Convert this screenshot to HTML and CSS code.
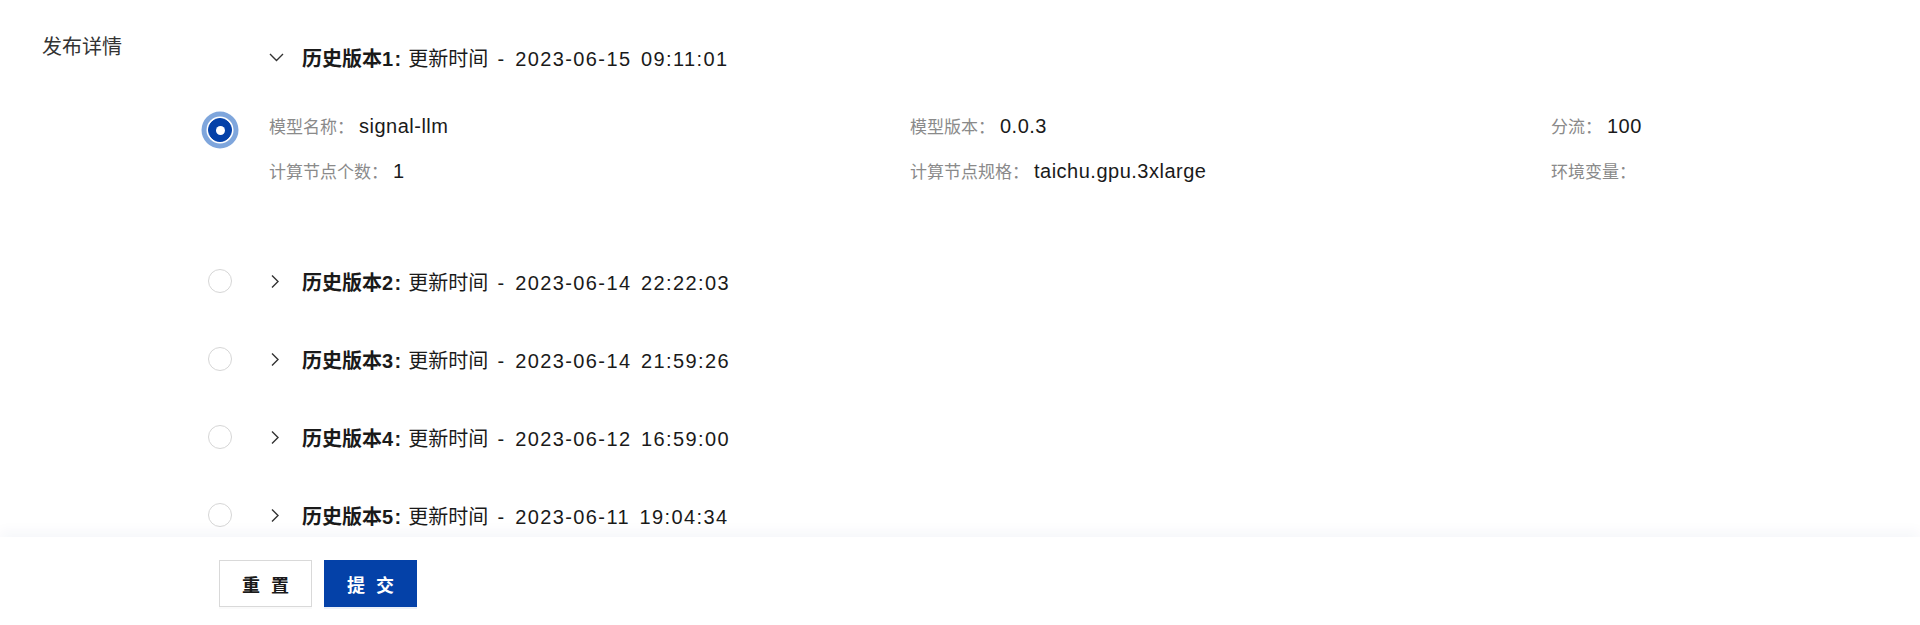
FILE: index.html
```html
<!DOCTYPE html>
<html lang="zh-CN">
<head>
    <meta charset="UTF-8">
    <meta name="viewport" content="width=device-width, initial-scale=1.0">
    <title>发布详情</title>
    <link rel="stylesheet" href="styles.css">
</head>
<body>
    <div class="page">
        <div class="form-row">
            <div class="form-label">发布详情</div>
            <div class="version-list">
                <div class="version">
                    <span class="radio checked"></span>
                    <div class="panel">
                        <div class="panel-head">
                            <svg class="arrow" width="15" height="15" viewBox="0 0 15 15"><polyline points="1,4 7.5,10.5 14,4" fill="none" stroke="#333" stroke-width="1.4"/></svg>
                            <span><b>历史版本<span class="num">1:</span></b> 更新时间<span class="num"> - 2023-06-15 09:11:01</span></span>
                        </div>
                        <div class="panel-body">
                            <div class="field"><span class="field-label">模型名称：</span><span class="field-value">signal-llm</span></div>
                            <div class="field"><span class="field-label">模型版本：</span><span class="field-value">0.0.3</span></div>
                            <div class="field"><span class="field-label">分流：</span><span class="field-value">100</span></div>
                            <div class="field"><span class="field-label">计算节点个数：</span><span class="field-value">1</span></div>
                            <div class="field"><span class="field-label">计算节点规格：</span><span class="field-value">taichu.gpu.3xlarge</span></div>
                            <div class="field"><span class="field-label">环境变量：</span><span class="field-value"></span></div>
                        </div>
                    </div>
                </div>
                <div class="version">
                    <span class="radio"></span>
                    <div class="panel">
                        <div class="panel-head">
                            <svg class="arrow" width="15" height="15" viewBox="0 0 15 15"><polyline points="3,1.5 9,7.5 3,13.5" fill="none" stroke="#333" stroke-width="1.4"/></svg>
                            <span><b>历史版本<span class="num">2:</span></b> 更新时间<span class="num"> - 2023-06-14 22:22:03</span></span>
                        </div>
                    </div>
                </div>
                <div class="version">
                    <span class="radio"></span>
                    <div class="panel">
                        <div class="panel-head">
                            <svg class="arrow" width="15" height="15" viewBox="0 0 15 15"><polyline points="3,1.5 9,7.5 3,13.5" fill="none" stroke="#333" stroke-width="1.4"/></svg>
                            <span><b>历史版本<span class="num">3:</span></b> 更新时间<span class="num"> - 2023-06-14 21:59:26</span></span>
                        </div>
                    </div>
                </div>
                <div class="version">
                    <span class="radio"></span>
                    <div class="panel">
                        <div class="panel-head">
                            <svg class="arrow" width="15" height="15" viewBox="0 0 15 15"><polyline points="3,1.5 9,7.5 3,13.5" fill="none" stroke="#333" stroke-width="1.4"/></svg>
                            <span><b>历史版本<span class="num">4:</span></b> 更新时间<span class="num"> - 2023-06-12 16:59:00</span></span>
                        </div>
                    </div>
                </div>
                <div class="version">
                    <span class="radio"></span>
                    <div class="panel">
                        <div class="panel-head">
                            <svg class="arrow" width="15" height="15" viewBox="0 0 15 15"><polyline points="3,1.5 9,7.5 3,13.5" fill="none" stroke="#333" stroke-width="1.4"/></svg>
                            <span><b>历史版本<span class="num">5:</span></b> 更新时间<span class="num"> - 2023-06-11 19:04:34</span></span>
                        </div>
                    </div>
                </div>
            </div>
        </div>
    </div>
    <div class="footer">
        <button class="btn"><span>重置</span></button>
        <button class="btn btn-primary"><span>提交</span></button>
    </div>
</body>
</html>
```

FILE: styles.css
```css
html, body {
    height: 100%;
}
body {
    margin: 0;
    font-family: "Liberation Sans", "Noto Sans CJK SC", sans-serif;
    color: #1a1a1a;
    background: #fff;
    display: flex;
    flex-direction: column;
    overflow: hidden;
}
.page {
    flex: 1;
    min-height: 0;
    overflow: hidden;
    padding: 32px 0 0 42px;
}
.form-row {
    display: flex;
}
.form-label {
    width: 166px;
    flex-shrink: 0;
    font-size: 20px;
    line-height: 30px;
    color: #333;
}
.version-list {
    display: flex;
    flex-direction: column;
    gap: 32px;
    padding-top: 2px;
}
.version {
    display: flex;
    align-items: center;
}
.radio {
    width: 24px;
    height: 24px;
    box-sizing: border-box;
    border: 1px solid #d6d6d6;
    border-radius: 50%;
    flex-shrink: 0;
    margin-right: 38px;
    display: flex;
    align-items: center;
    justify-content: center;
}
.radio.checked {
    background: #0441a8;
    border-color: #0441a8;
    box-shadow: 0 0 0 1.5px #fff, 0 0 0 6.5px #7fa6dc;
}
.radio.checked::after {
    content: "";
    width: 9px;
    height: 9px;
    border-radius: 50%;
    background: #fff;
}
.panel-head {
    height: 46px;
    display: flex;
    align-items: center;
    font-size: 20px;
    white-space: pre;
}
.panel-head .num {
    letter-spacing: 1.4px;
    word-spacing: 2.5px;
}
.arrow {
    margin-left: -1px;
    margin-right: 18px;
    flex-shrink: 0;
}
.panel-body {
    display: grid;
    grid-template-columns: repeat(3, 641px);
    grid-auto-rows: 30px;
    row-gap: 15px;
    padding: 30px 0 41px 0;
    margin-left: -1px;
}
.field {
    display: flex;
    align-items: baseline;
    align-self: center;
    white-space: nowrap;
}
.field-label {
    font-size: 17px;
    color: #8a8a8a;
    margin-right: 5px;
}
.field-value {
    font-size: 20px;
    letter-spacing: 0.5px;
    color: #1a1a1a;
}
.footer {
    height: 88px;
    flex-shrink: 0;
    box-sizing: border-box;
    padding: 23px 0 0 219px;
    display: flex;
    align-items: flex-start;
    gap: 12px;
    background: #fff;
    box-shadow: 0 -6px 12px rgba(30, 50, 140, 0.04);
    position: relative;
}
.btn {
    width: 93px;
    height: 47px;
    box-sizing: border-box;
    border: 1.5px solid #d9d9d9;
    background: #fff;
    color: #1a1a1a;
    font-family: "Noto Sans CJK SC", sans-serif;
    font-size: 18px;
    font-weight: 700;
    cursor: pointer;
    box-shadow: 0 2px 0 rgba(0, 0, 0, 0.02);
    padding: 0;
}
.btn span {
    letter-spacing: 11px;
    margin-right: -11px;
}
.btn-primary {
    background: #0441a8;
    border-color: #0441a8;
    color: #fff;
    box-shadow: 0 2px 0 rgba(5, 60, 160, 0.08);
}
```
